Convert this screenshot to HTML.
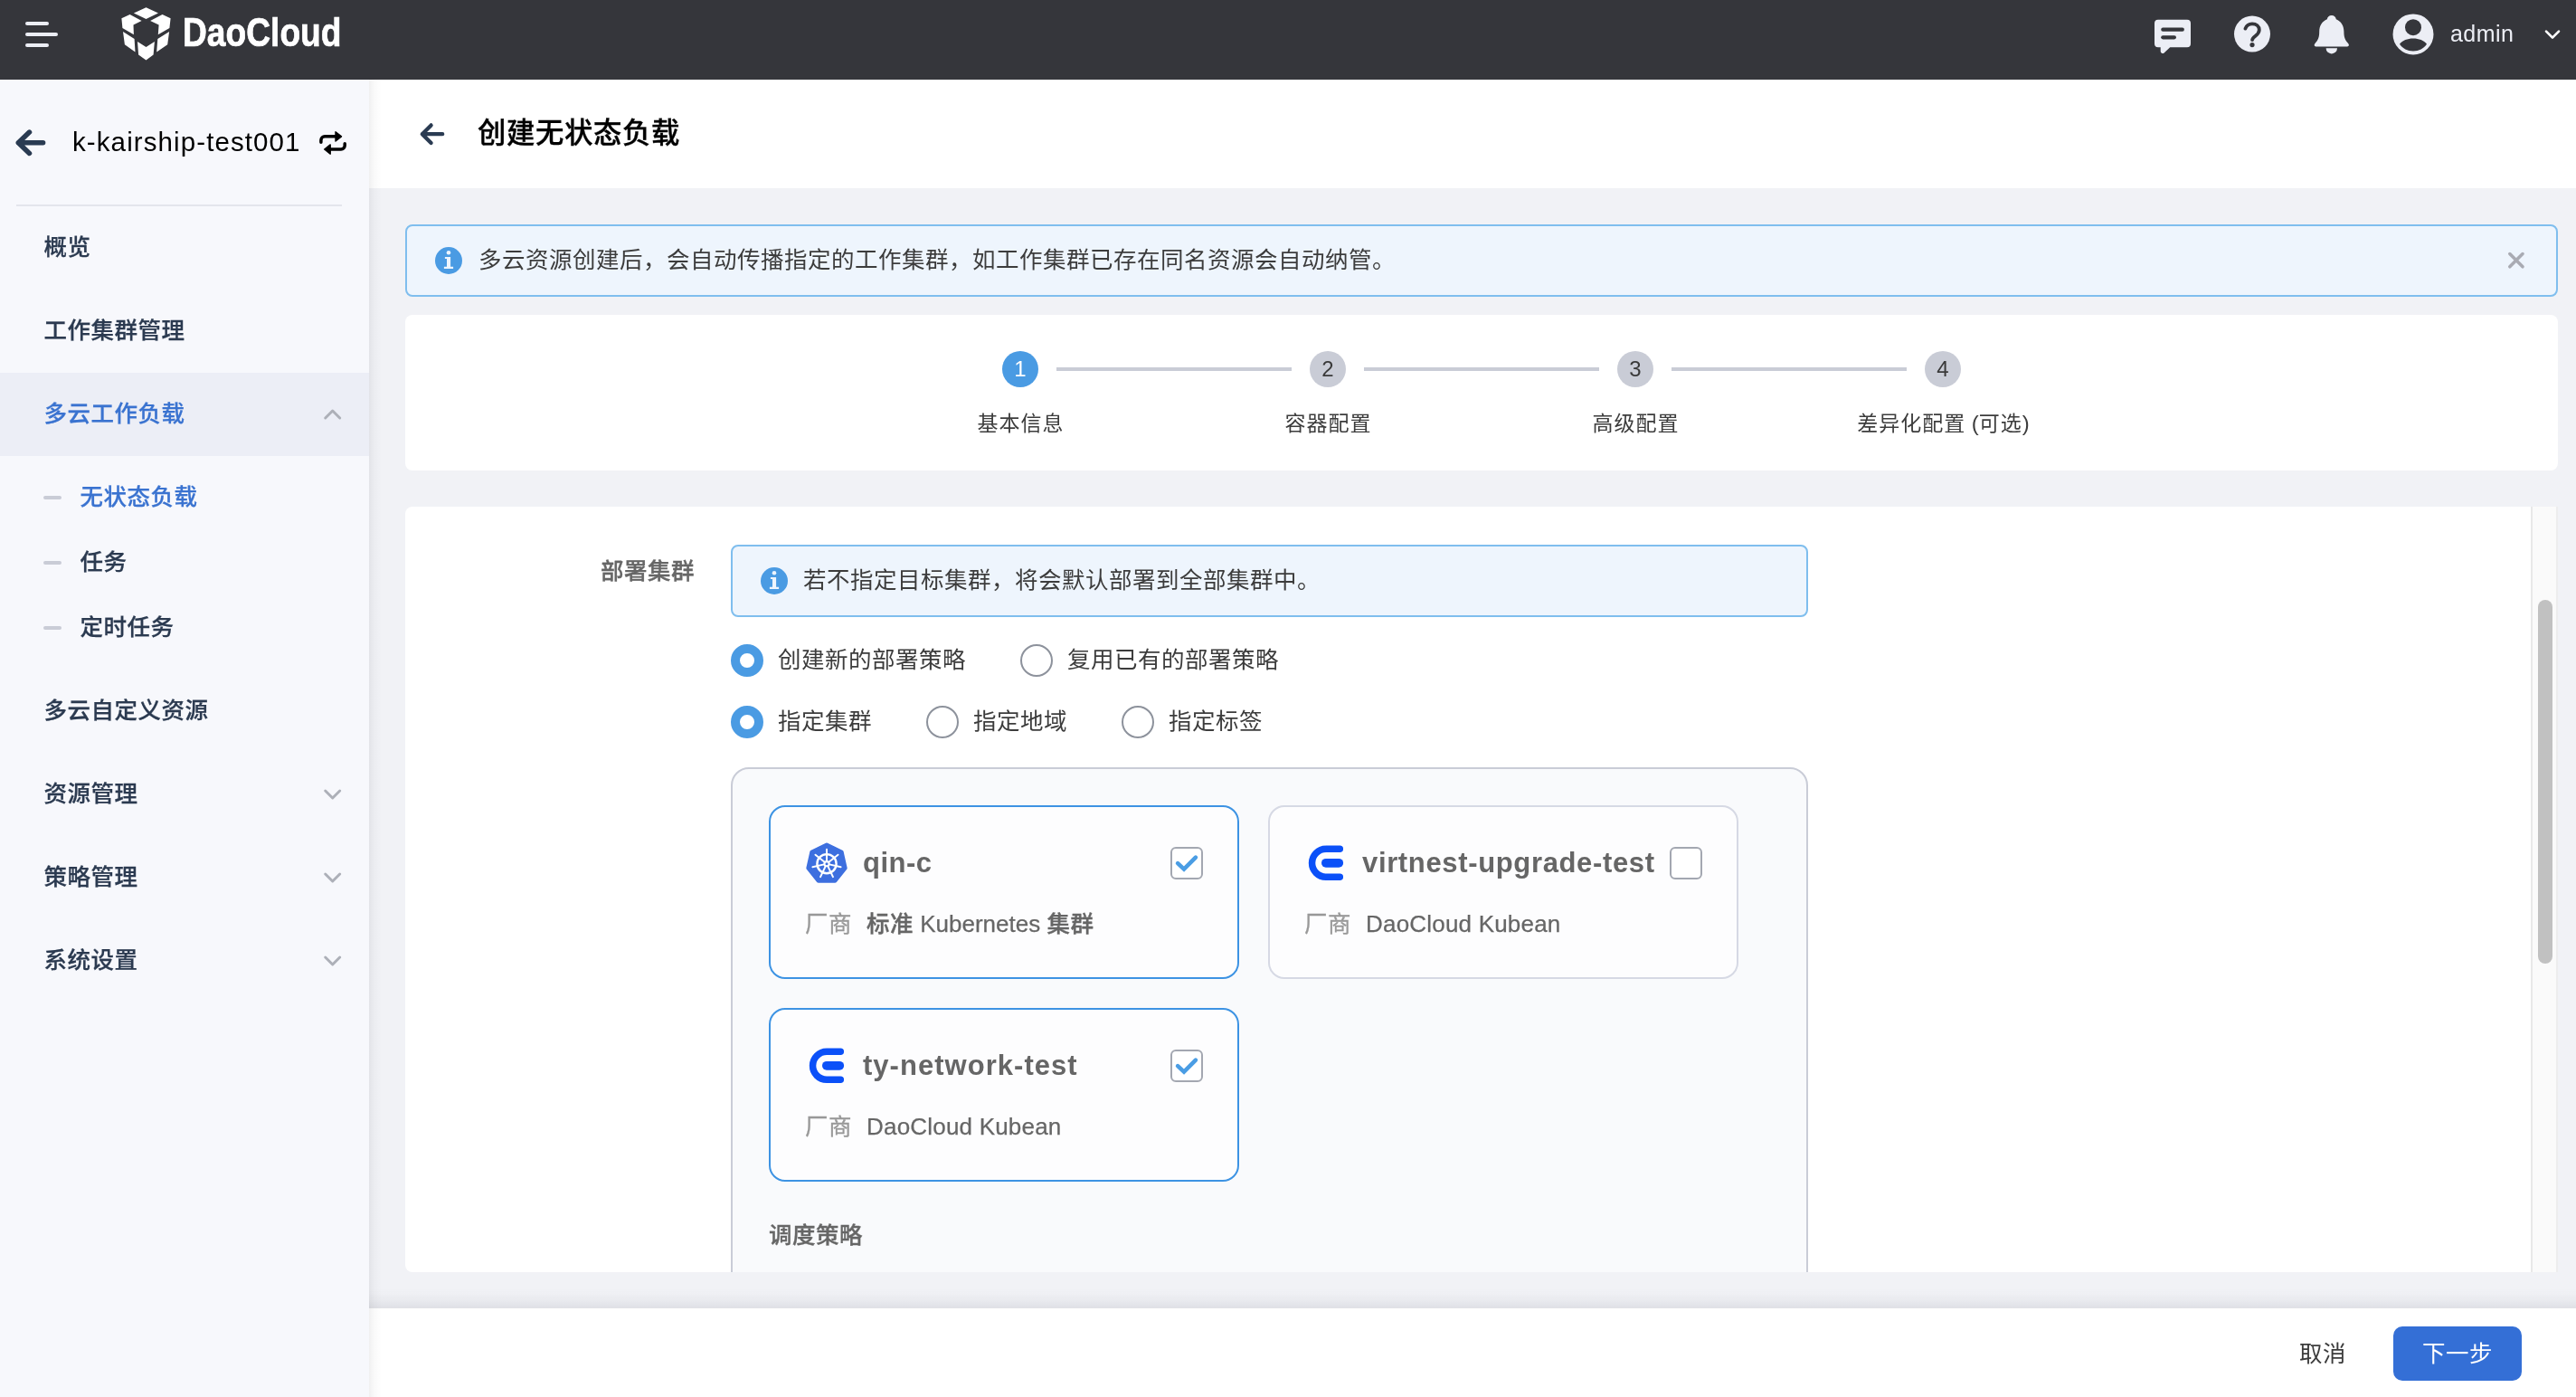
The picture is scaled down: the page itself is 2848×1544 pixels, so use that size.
<!DOCTYPE html>
<html lang="zh-CN">
<head>
<meta charset="utf-8">
<title>创建无状态负载</title>
<style>
*{box-sizing:border-box;margin:0;padding:0}
html,body{width:2848px;height:1544px;overflow:hidden}
@media (max-width:2000px){html{zoom:.5}}
body{position:relative;background:#f1f2f6;font-family:"Liberation Sans","Noto Sans CJK SC",sans-serif;font-size:25.500px;letter-spacing:.500px;color:#3c3c3c}
.abs{position:absolute}
body>div{will-change:transform}
.t{position:absolute;white-space:nowrap;line-height:40px;height:40px}
svg{position:absolute;overflow:visible}

/* header */
#hd{left:0;top:0;width:2848px;height:88px;background:#35363b}
#brand{letter-spacing:0;left:201.500px;top:10.800px;-webkit-text-stroke:.7px #fff;font-size:45px;line-height:50px;height:50px;font-weight:700;color:#fff;transform-origin:0 50%;transform:scaleX(.826)}
#admin{left:2709px;top:16.600px;color:#eceef5;font-size:25px;letter-spacing:.45px}

/* sidebar */
#sb{left:0;top:88px;width:408px;height:1456px;background:#f7f8fc}
#sbshadow{left:408px;top:88px;width:14px;height:1456px;background:linear-gradient(90deg,rgba(10,10,20,.06),rgba(10,10,20,.022) 40%,rgba(10,10,20,0))}
#cl{left:80px;top:48.500px;font-size:29.500px;letter-spacing:1.100px;color:#000}
#sbdiv{left:18px;top:138px;width:360px;height:2px;background:#e3e5ec}
.mi{left:48.500px;-webkit-text-stroke:.250px;font-size:25.500px;font-weight:500;color:#2b3a50}
.mi.on{color:#3a73d0}
.sub{left:88.500px}
.dash{left:48px;width:20px;height:4px;border-radius:2px;background:#c9ccd6}
#act{left:0;top:324px;width:408px;height:92px;background:#eceef6}

/* title bar */
#tb{left:408px;top:88px;width:2440px;height:120px;background:#fff}
#title{left:120px;top:36px;font-size:31.400px;letter-spacing:.600px;line-height:48px;height:48px;font-weight:500;-webkit-text-stroke:.35px #000;color:#000}

/* alerts */
.alert{border:2px solid #7fbeee;background:#eef5fd;border-radius:8px}
.alert .t{color:#3c3c3c}

/* steps */
#steps{left:448px;top:348px;width:2380px;height:172px;background:#fff;border-radius:8px}
.sc{letter-spacing:0;width:40px;height:40px;border-radius:50%;top:40px;background:#c9ccd6;color:#3a3a3a;font-size:24px;line-height:40px;text-align:center}
.sc.on{background:#4a9be3;color:#fff}
.sl{top:58px;height:4px;width:260px;background:#c9ccd6}
.st{top:100px;margin-left:.500px;font-size:23px;letter-spacing:1px;color:#3c3c3c;transform:translateX(-50%)}

/* form */
#form{left:448px;top:560px;width:2380px;height:846px;background:#fff;border-radius:8px 0 0 8px;overflow:hidden}
#track{left:2350px;top:0;width:30px;height:846px;background:#fafafa;border-left:2px solid #e8e8e8;border-right:2px solid #ededed}
#thumb{left:2358px;top:103px;width:16px;height:402px;border-radius:8px;background:#c1c1c1}
.lab{color:#666;font-weight:500;-webkit-text-stroke:.350px}
.radio{width:36px;height:36px;border-radius:50%;border:2px solid #8d929c;background:#fff}
.radio.on{border:10px solid #4a9be3}
#box{left:360px;top:288px;width:1191px;height:700px;border:2px solid #c9ccd7;border-radius:20px;background:#f9fafc}
.card{width:520px;height:192px;border:2px solid #d6d9e4;border-radius:18px;background:#fdfdfe}
.card.on{border-color:#3d93e3}
.card .nm{left:102px;top:40px;font-size:31px;line-height:44px;height:44px;font-weight:700;color:#666}
.card .vk{left:38px;top:109px;color:#999;-webkit-text-stroke:.300px}
.card .vv{left:106px;top:109px;color:#666}
.cb{left:442px;top:44px;width:36px;height:36px;border:2px solid #a3a7b1;border-radius:6px;background:#fff}

/* footer */
#ft{left:408px;top:1446px;width:2440px;height:98px;background:#fff}
#ftshadow{left:408px;top:1424px;width:2440px;height:22px;background:linear-gradient(180deg,rgba(15,20,40,0),rgba(15,20,40,.012) 30%,rgba(15,20,40,.04) 65%,rgba(15,20,40,.08))}
#next{left:2238px;top:20px;width:142px;height:60px;border-radius:10px;background:#346fd6;color:#fff;text-align:center;line-height:60px;font-size:25.500px}
#cancel{left:2134px;top:30px;color:#3c3c3c}
.la{font-size:26px;letter-spacing:.200px;-webkit-text-stroke:.250px}
</style>
</head>
<body>

<!-- HEADER -->
<div id="hd" class="abs">
  <svg id="hdi" style="left:0;top:0" width="2848" height="88" viewBox="0 0 2848 88">
    <g stroke="#eceef5" stroke-width="4" stroke-linecap="round" fill="none"><path d="M30 26H52"/><path d="M30 38H62"/><path d="M30 50H52"/></g>
    <path fill="#fff" d="M161.5 8.2L175.0 14.4L161.5 21.1L147.9 14.4ZM134.4 20.2L143.6 16.1L156.6 23.1L147.5 27.6L147.9 38.3L135.4 31.0ZM188.6 20.2L179.5 16.1L166.1 23.1L175.6 27.6L174.8 38.3L187.4 31.0ZM136.0 35.1L148.6 43.0L149.5 57.6L137.9 49.2ZM187.1 35.1L174.3 43.0L173.2 57.6L185.2 49.2ZM152.0 46.0L161.5 51.9L170.9 46.0L169.6 60.4L161.5 66.6L153.1 60.4Z"/>
    <g fill="#eceef5">
      <path d="M2386 21.800H2418a4 4 0 0 1 4 4V48.300a4 4 0 0 1 -4 4H2399.200L2392.600 58.400a2.300 2.300 0 0 1 -3.900 -1.700V52.300H2386a4 4 0 0 1 -4 -4V25.800a4 4 0 0 1 4 -4Z"/>
      <circle cx="2490" cy="37.600" r="20"/>
      <path d="M2577.800 17.100c2.800 0 4.600 1.700 5 4.100c5.400 2.200 8.600 7.300 8.600 13.500c0 6.600 1.200 9.200 4.700 13.200c1.700 2 .5 3.500 -1.800 3.500h-33c-2.300 0 -3.500 -1.500 -1.800 -3.500c3.500 -4 4.700 -6.600 4.700 -13.200c0 -6.200 3.200 -11.300 8.600 -13.500c.4 -2.400 2.200 -4.100 5 -4.100Z"/>
      <path d="M2571.600 53.200h12.400a6.200 6.200 0 0 1 -12.400 0Z"/>
      <circle cx="2668" cy="37.900" r="22.500"/>
    </g>
    <g stroke="#35363b" stroke-width="4.200" stroke-linecap="round" fill="none">
      <path d="M2391.300 32.700H2412.800"/><path d="M2391.300 41.300H2403.900"/>
      <path d="M2482.400 31.600c1.200 -3.300 4 -5.300 7.600 -5.300c4.500 0 7.800 2.900 7.800 6.800c0 3 -1.500 4.600 -4.200 6.600c-2.300 1.700 -3.400 2.700 -3.500 4.400" stroke-width="3.800"/>
    </g>
    <circle cx="2490" cy="49.600" r="2.600" fill="#35363b"/>
    <circle cx="2668" cy="30.200" r="9" fill="#35363b"/>
    <path d="M2653 48.800c3.300 -4 8.600 -6.200 15 -6.200s11.700 2.200 15 6.200c-3.300 4.800 -8.600 7.700 -15 7.700s-11.700 -2.900 -15 -7.700Z" fill="#35363b"/>
    <path d="M2815 34.600l7 7l7 -7" stroke="#fff" stroke-width="2.600" stroke-linecap="round" stroke-linejoin="round" fill="none"/>
  </svg>
  <div id="brand" class="t">DaoCloud</div>
  <div id="admin" class="t">admin</div>
</div>

<!-- SIDEBAR -->
<div id="sb" class="abs">
  <div id="cl" class="t">k-kairship-test001</div>
  <div id="sbdiv" class="abs"></div>
  <div id="act" class="abs"></div>
  <div class="t mi" style="top:165px">概览</div>
  <div class="t mi" style="top:257px">工作集群管理</div>
  <div class="t mi on" style="top:349px">多云工作负载</div>
  <div class="abs dash" style="top:460px"></div>
  <div class="t mi sub on" style="top:441px">无状态负载</div>
  <div class="abs dash" style="top:532px"></div>
  <div class="t mi sub" style="top:513px">任务</div>
  <div class="abs dash" style="top:604px"></div>
  <div class="t mi sub" style="top:585px">定时任务</div>
  <div class="t mi" style="top:677px">多云自定义资源</div>
  <div class="t mi" style="top:769px">资源管理</div>
  <div class="t mi" style="top:861px">策略管理</div>
  <div class="t mi" style="top:953px">系统设置</div>
  <svg id="sbi" style="left:0;top:0" width="408" height="1456" viewBox="0 88 408 1456">
    <path d="M47.600 157.700H20.300M32.500 146.100L20.300 157.700L32.500 169.400" stroke="#2a3b52" stroke-width="5.500" stroke-linecap="round" stroke-linejoin="round" fill="none"/>
    <g stroke="#000" stroke-width="3.500" stroke-linecap="round" stroke-linejoin="round" fill="none">
      <path d="M354.900 157.300V155a4.200 4.200 0 0 1 4.200 -4.200H371"/>
      <path d="M381.200 158.700V160.800a4.200 4.200 0 0 1 -4.200 4.200H365.500"/>
    </g>
    <path d="M371 145.700L377.500 150.850L371 156Z" fill="#000" stroke="#000" stroke-width="1.400" stroke-linejoin="round"/>
    <path d="M365.200 159.850L358.700 165L365.200 170.150Z" fill="#000" stroke="#000" stroke-width="1.400" stroke-linejoin="round"/>
    <g stroke="#adb0b8" stroke-width="3" stroke-linecap="round" stroke-linejoin="round" fill="none"><path d="M359.7 462l8 -8l8 8"/><path d="M359.7 874l8 8l8 -8"/><path d="M359.7 966l8 8l8 -8"/><path d="M359.7 1058l8 8l8 -8"/></g>
  </svg>
</div>

<!-- TITLE BAR -->
<div id="tb" class="abs">
  <svg id="tbi" style="left:0;top:0" width="2440" height="120" viewBox="408 88 2440 120">
    <path d="M489.200 148.200H466.800M476.600 138.400L466.800 148.200L476.600 158" stroke="#2a3b52" stroke-width="4.300" stroke-linecap="round" stroke-linejoin="round" fill="none"/>
  </svg>
  <div id="title" class="t">创建无状态负载</div>
</div>

<!-- TOP ALERT -->
<div id="al1" class="abs alert" style="left:448px;top:248px;width:2380px;height:80px">
  <svg style="left:-2px;top:-2px" width="2380" height="80" viewBox="448 248 2380 80">
    <circle cx="496" cy="288" r="15" fill="#4a9be3"/><circle cx="496" cy="279.2" r="2.300" fill="#eef5fd"/><path d="M491.9 283.9h6.200v10.800h3v2.300h-10.200v-2.300h3.100v-8.600h-2.100Z" fill="#eef5fd"/>
    <path d="M2774.800 280.600l14.200 14.200M2789 280.600l-14.200 14.200" stroke="#a9abb3" stroke-width="3.600" stroke-linecap="round" fill="none"/>
  </svg>
  <div class="t" style="left:79px;top:17px">多云资源创建后，会自动传播指定的工作集群，如工作集群已存在同名资源会自动纳管。</div>
</div>

<!-- STEPS -->
<div id="steps" class="abs">
  <div class="abs sc on" style="left:660px">1</div>
  <div class="abs sl" style="left:720px"></div>
  <div class="abs sc" style="left:1000px">2</div>
  <div class="abs sl" style="left:1060px"></div>
  <div class="abs sc" style="left:1340px">3</div>
  <div class="abs sl" style="left:1400px"></div>
  <div class="abs sc" style="left:1680px">4</div>
  <div class="t st" style="left:680px">基本信息</div>
  <div class="t st" style="left:1020px">容器配置</div>
  <div class="t st" style="left:1360px">高级配置</div>
  <div class="t st" style="left:1700px">差异化配置<span style="font-size:24px;letter-spacing:0"> (</span>可选<span style="font-size:24px;letter-spacing:0">)</span></div>
</div>

<!-- FORM -->
<div id="form" class="abs">
  <div class="t lab" style="left:216px;top:51px">部署集群</div>
  <div class="abs alert" style="left:360px;top:42px;width:1191px;height:80px">
    <div class="t" style="left:78px;top:17px">若不指定目标集群，将会默认部署到全部集群中。</div>
  </div>
  <div class="abs radio on" style="left:360px;top:152px"></div>
  <div class="t" style="left:412px;top:149px">创建新的部署策略</div>
  <div class="abs radio" style="left:680px;top:152px"></div>
  <div class="t" style="left:732px;top:149px">复用已有的部署策略</div>
  <div class="abs radio on" style="left:360px;top:220px"></div>
  <div class="t" style="left:412px;top:217px">指定集群</div>
  <div class="abs radio" style="left:576px;top:220px"></div>
  <div class="t" style="left:628px;top:217px">指定地域</div>
  <div class="abs radio" style="left:792px;top:220px"></div>
  <div class="t" style="left:844px;top:217px">指定标签</div>

  <div id="box" class="abs">
    <div class="abs card on" style="left:40px;top:40px">
      <div class="t nm" style="letter-spacing:.500px">qin-c</div>
      <div class="abs cb"></div>
      <div class="t vk">厂商</div><div class="t vv lab">标准<span class="la" style="letter-spacing:0"> Kubernetes </span>集群</div>
    </div>
    <div class="abs card" style="left:592px;top:40px">
      <div class="t nm" style="letter-spacing:.650px">virtnest-upgrade-test</div>
      <div class="abs cb"></div>
      <div class="t vk">厂商</div><div class="t vv la">DaoCloud Kubean</div>
    </div>
    <div class="abs card on" style="left:40px;top:264px">
      <div class="t nm" style="letter-spacing:1.030px">ty-network-test</div>
      <div class="abs cb"></div>
      <div class="t vk">厂商</div><div class="t vv la">DaoCloud Kubean</div>
    </div>
    <div class="t lab" style="left:40px;top:495px">调度策略</div>
  </div>
  <svg id="fi" style="left:0;top:0" width="2380" height="846" viewBox="448 560 2380 846">
    <circle cx="856" cy="642" r="15" fill="#4a9be3"/><circle cx="856" cy="633.2" r="2.300" fill="#eef5fd"/><path d="M851.9 637.9h6.200v10.800h3v2.300h-10.200v-2.300h3.100v-8.600h-2.100Z" fill="#eef5fd"/>
    <path d="M914 933.7L930.42 941.61L934.47 959.37L923.11 973.62L904.89 973.62L893.53 959.37L897.58 941.61Z" fill="#3d6fdf" stroke="#3d6fdf" stroke-width="4.400" stroke-linejoin="round"/><circle cx="914" cy="954.7" r="10.600" fill="none" stroke="#fff" stroke-width="2.400"/><path d="M914 951.7L914 938.7M916.35 952.83L926.51 944.72M916.92 955.37L929.6 958.26M915.3 957.4L920.94 969.12M912.7 957.4L907.06 969.12M911.08 955.37L898.4 958.26M911.65 952.83L901.49 944.72" stroke="#fff" stroke-width="2" stroke-linecap="round" fill="none"/><circle cx="914" cy="954.7" r="3.600" fill="#fff"/><circle cx="914" cy="954.7" r="1.500" fill="#3d6fdf"/>
    <path d="M1481.3 938.3H1466.05a15.500 15.500 0 0 0 0 31H1481.3" stroke="#0b50f8" stroke-width="7.500" stroke-linecap="round" fill="none"/><path d="M1465.9 953.8H1480.2" stroke="#0b50f8" stroke-width="9.800" stroke-linecap="round" fill="none"/>
    <path d="M929.3 1162.3H914.05a15.500 15.500 0 0 0 0 31H929.3" stroke="#0b50f8" stroke-width="7.500" stroke-linecap="round" fill="none"/><path d="M913.9 1177.8H928.2" stroke="#0b50f8" stroke-width="9.800" stroke-linecap="round" fill="none"/>
    <path d="M1302.1 954.1l6.900 6.500l12.900 -13" stroke="#4a9de4" stroke-width="4.600" stroke-linecap="round" stroke-linejoin="miter" fill="none"/>
    <path d="M1302.1 1178.1l6.900 6.500l12.900 -13" stroke="#4a9de4" stroke-width="4.600" stroke-linecap="round" stroke-linejoin="miter" fill="none"/>
  </svg>
  <div id="track" class="abs"></div>
  <div id="thumb" class="abs"></div>
</div>

<!-- FOOTER -->
<div id="ftshadow" class="abs"></div>
<div id="ft" class="abs">
  <div id="cancel" class="t">取消</div>
  <div id="next" class="abs">下一步</div>
</div>
<div id="sbshadow" class="abs"></div>
</body>
</html>
